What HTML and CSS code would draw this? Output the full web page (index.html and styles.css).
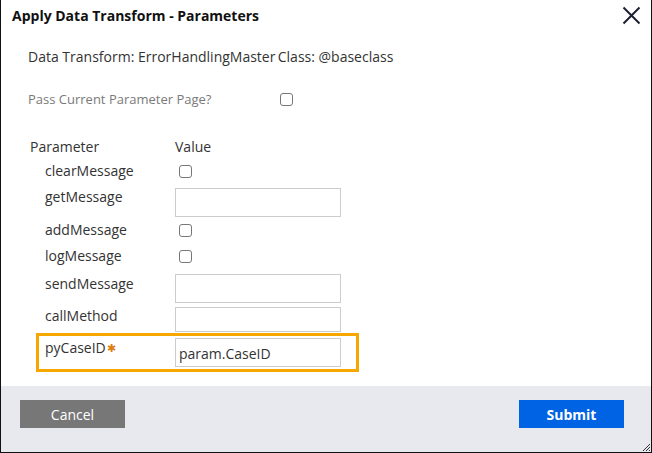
FILE: index.html
```html
<!DOCTYPE html>
<html lang="en">
<head>
<meta charset="utf-8">
<title>Apply Data Transform - Parameters</title>
<link rel="stylesheet" href="styles.css">
</head>
<body>
<div class="dialog">
  <header class="dlg-header">
    <h1 class="dlg-title">Apply Data Transform - Parameters</h1>
    <button class="close-btn" aria-label="Close">
      <svg width="19" height="19" viewBox="0 0 19 19"><path d="M1.5 1.5 L17.5 17.5 M17.5 1.5 L1.5 17.5" stroke="#1e2034" stroke-width="2" fill="none"/></svg>
    </button>
  </header>
  <main class="dlg-body">
    <p class="info-line">Data Transform: ErrorHandlingMaster&#8201;Class: @baseclass</p>
    <div class="pass-row">
      <span class="pass-label">Pass Current Parameter Page?</span>
      <input type="checkbox" class="cb">
    </div>
    <div class="param-table">
      <div class="prow prow-head">
        <span class="phead-label">Parameter</span>
        <span class="phead-value">Value</span>
      </div>
      <div class="prow">
        <span class="plabel">clearMessage</span>
        <span class="pval"><input type="checkbox" class="cb cb-row"></span>
      </div>
      <div class="prow">
        <span class="plabel">getMessage</span>
        <span class="pval"><input type="text" class="txt"></span>
      </div>
      <div class="prow">
        <span class="plabel">addMessage</span>
        <span class="pval"><input type="checkbox" class="cb cb-row"></span>
      </div>
      <div class="prow">
        <span class="plabel">logMessage</span>
        <span class="pval"><input type="checkbox" class="cb cb-row"></span>
      </div>
      <div class="prow">
        <span class="plabel">sendMessage</span>
        <span class="pval"><input type="text" class="txt txt-flush"></span>
      </div>
      <div class="prow">
        <span class="plabel">callMethod</span>
        <span class="pval"><input type="text" class="txt txt-short"></span>
      </div>
      <div class="prow prow-highlight">
        <span class="plabel plabel-hl">pyCaseID<span class="req">&#10033;</span></span>
        <span class="pval"><input type="text" class="txt txt-hl" value="param.CaseID"></span>
      </div>
    </div>
  </main>
  <footer class="dlg-footer">
    <button class="btn btn-cancel">Cancel</button>
    <button class="btn btn-submit">Submit</button>
  </footer>
  <svg class="grip" width="10" height="10" viewBox="0 0 10 10"><path d="M9 2 L2 9 M9 5 L5 9 M9 8 L8 9" stroke="#333" stroke-width="1" fill="none"/></svg>
</div>
</body>
</html>
```

FILE: styles.css
```css
* { box-sizing: border-box; }
html, body {
  margin: 0;
  padding: 0;
  background: #ffffff;
}
body {
  font-family: "Open Sans", "Noto Sans", "Liberation Sans", sans-serif;
  color: #333333;
}
.dialog {
  position: relative;
  width: 652px;
  height: 453px;
  border: 1px solid #111111;
  border-top: none;
  display: flex;
  flex-direction: column;
  background: #ffffff;
}
.dlg-header {
  height: 33px;
  display: flex;
  align-items: flex-start;
  justify-content: space-between;
  padding: 0 10px 0 11px;
}
.dlg-title {
  margin: 6px 0 0 0;
  font-size: 14px;
  line-height: 20px;
  font-weight: 700;
  color: #111111;
}
.close-btn {
  margin-top: 6px;
  padding: 0;
  border: none;
  background: transparent;
  width: 19px;
  height: 19px;
  display: flex;
}
.dlg-body {
  flex: 1;
  padding: 14px 0 0 27px;
}
.info-line {
  margin: 0;
  font-size: 14px;
  line-height: 20px;
  color: #333333;
}
.pass-row {
  margin-top: 22px;
  display: flex;
  align-items: center;
  height: 20px;
}
.pass-label {
  width: 252px;
  font-size: 13px;
  color: #7a7a7a;
}
.cb {
  appearance: none;
  -webkit-appearance: none;
  width: 13px;
  height: 13px;
  margin: 0;
  border: 1px solid #777777;
  border-radius: 3px;
  background: #ffffff;
  flex: none;
}
.param-table {
  margin-top: 28px;
  margin-left: 2px;
  display: grid;
  grid-template-rows: 24px 26px 33px 26px 28px 32px 27px 39px;
  width: 329px;
}
.prow {
  display: flex;
  align-items: flex-start;
  font-size: 14px;
  line-height: 20px;
}
.prow-head {
  line-height: 19px;
}
.phead-label {
  width: 145px;
}
.plabel {
  width: 145px;
  padding-left: 15px;
}
.pval {
  display: flex;
}
.cb-row {
  margin-top: 4px;
  margin-left: 4px;
}
.txt {
  width: 166px;
  height: 29px;
  margin: 1px 0 0 0;
  border: 1px solid #cccccc;
  border-radius: 0;
  padding: 2px 3px 0 3px;
  font-family: inherit;
  font-size: 14px;
  color: #333333;
  background: #ffffff;
  outline: none;
}
.txt-flush {
  margin-top: 0;
}
.txt-short {
  height: 25px;
}
.prow-highlight {
  margin-left: 6px;
  width: 323px;
  height: 39px;
  border: 3px solid #f6a800;
}
.plabel-hl {
  width: 136px;
  padding-left: 6px;
  margin-top: 2px;
}
.req {
  color: #e07c10;
  font-size: 11px;
  margin-left: 1px;
  vertical-align: 1px;
}
.txt-hl {
  margin-top: 2px;
}
.dlg-footer {
  height: 66px;
  background: #e8e9ee;
  display: flex;
  justify-content: space-between;
  align-items: flex-start;
  padding: 14px 27px 0 19px;
}
.btn {
  width: 105px;
  height: 28px;
  border: none;
  border-radius: 0;
  font-family: inherit;
  font-size: 14px;
  color: #ffffff;
  padding: 0;
}
.btn-cancel {
  background: #777777;
}
.btn-submit {
  background: #0063e3;
  font-weight: 700;
}
.grip {
  position: absolute;
  right: 0;
  bottom: 0;
}
```
